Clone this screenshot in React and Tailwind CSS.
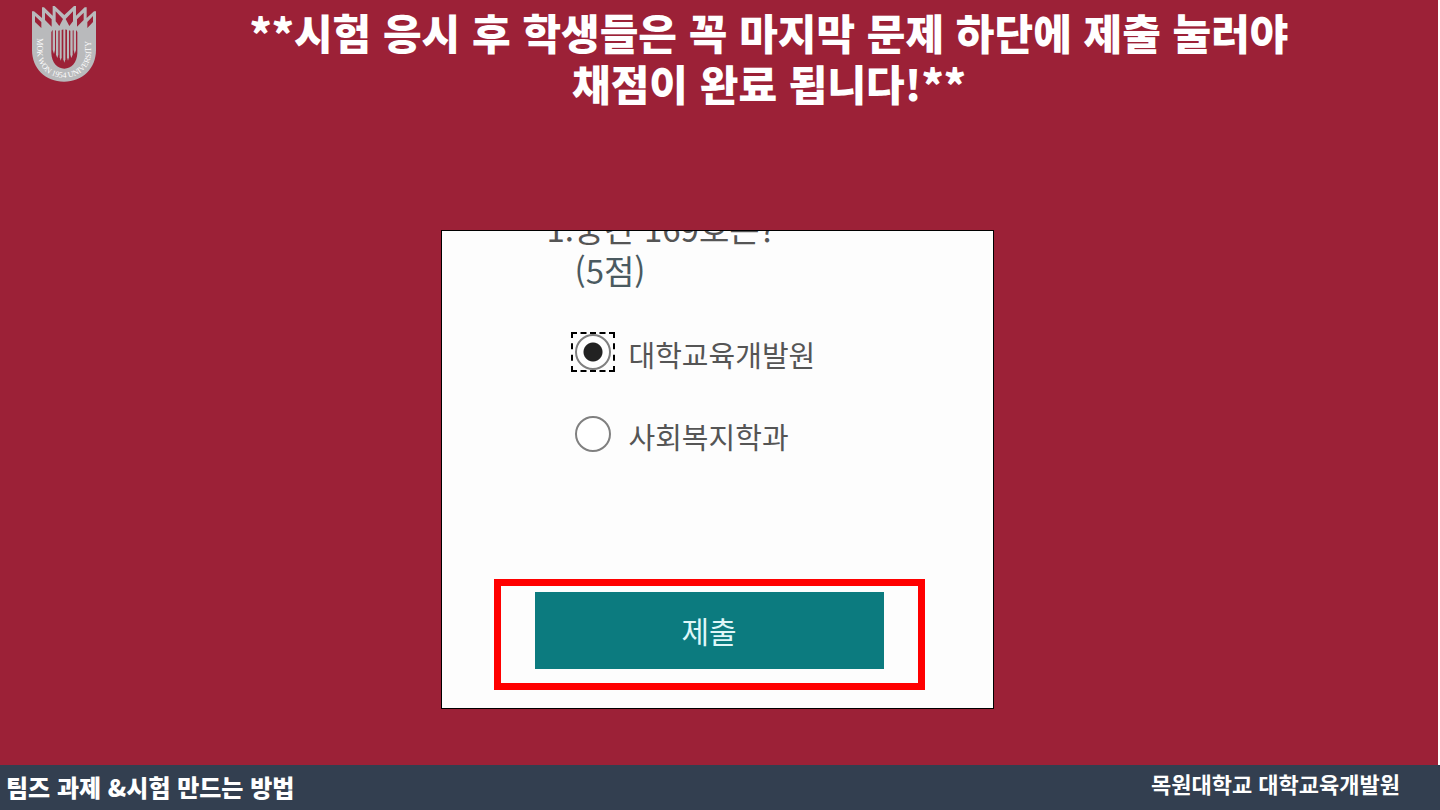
const KR = "font-['Noto_Sans_CJK_KR',sans-serif]";

function Emblem() {
  return (
    <svg viewBox="36 18 192 228" className="w-16 shrink-0" role="img" aria-label="MOKWON UNIVERSITY">
      <path
        fill="#b9babc"
        fillRule="evenodd"
        d="M36 34H42L66 54V22H72L98 47V18H104L133 45L162 18H168V47L194 22H200V54L222 34H228V150C228 205 188 245 132 245C76 245 36 205 36 150Z
           M45 48L64 66V84L45 66Z M75 38L95 58V80L75 60Z M107 34L129 57L118 78L107 64Z
           M219 48L202 66V84L219 66Z M191 38L171 58V80L191 60Z M159 34L137 57L148 78L159 64Z
           M94 96V160C95 188 112 206 133 206C154 206 171 188 172 160V96L168 90L152 92L133 88L114 92L98 90Z"
      />
      <g fill="#b9babc">
        <path d="M98 86H105V150L102 162L98 150Z" />
        <path d="M108 86H115V164L112 174L108 164Z" />
        <path d="M119 86H125V172L122 182L119 172Z" />
        <path d="M130 84H136V178L133 188L130 178Z" />
        <path d="M141 86H147V172L144 182L141 172Z" />
        <path d="M151 86H158V164L154 174L151 164Z" />
        <path d="M161 86H168V150L164 162L161 150Z" />
      </g>
      <path id="emblem-arc" fill="none" d="M51 115V150C51 202 86 233 132 233C178 233 214 202 214 150V100" />
      <text fill="#fff" fontSize="24" className="font-['Liberation_Serif',serif]">
        <textPath href="#emblem-arc">MOK WON 1954 UNIVERSITY</textPath>
      </text>
    </svg>
  );
}

const radio =
  "size-9 appearance-none rounded-full border-2 border-[#808080] bg-white checked:bg-[radial-gradient(circle,#222_9px,transparent_10px)]";

function Option({ id, label, checked }) {
  return (
    <div className="flex h-10 items-center gap-3.5">
      <span
        className={
          checked
            ? "flex h-10 w-11 items-center justify-center border-2 border-dashed border-black"
            : "flex h-10 w-11 items-center justify-center"
        }
      >
        <input id={id} type="radio" name="answer" defaultChecked={checked} className={radio} />
      </span>
      <label htmlFor={id} className="pt-1 text-[29px] leading-9 text-[#555]">
        {label}
      </label>
    </div>
  );
}

export default function App() {
  return (
    <div className={`${KR} flex min-h-screen flex-col bg-[#333f50] text-white`} lang="ko">
      <main className="flex flex-1 flex-col border-r-2 border-white bg-[#9c2137]">
        <header className="flex items-start px-8 pt-1.5">
          <Emblem />
          <h1 className="flex-1 pl-9 text-center text-[42px] leading-[51px] font-black">
            **시험 응시 후 학생들은 꼭 마지막 문제 하단에 제출 눌러야
            <br />
            채점이 완료 됩니다!**
          </h1>
        </header>

        <div className="flex justify-center pt-[122px] pr-1">
          <form
            className="flex h-[479px] w-[553px] flex-col overflow-hidden border border-black bg-[#fdfdfd]"
            onSubmit={(e) => e.preventDefault()}
          >
            <div role="radiogroup" aria-labelledby="question" className="-mt-6 flex flex-col pl-[129px]">
              <p id="question" className="-ml-6 text-[33px] leading-[42px] text-[#555]">
                1.중간 169호는?
                <span className="block pl-7 text-[#4a5a60]">(5점)</span>
              </p>
              <div className="mt-[41px] flex flex-col gap-[42px]">
                <Option id="center" label="대학교육개발원" checked />
                <Option id="welfare" label="사회복지학과" />
              </div>
            </div>
            <div className="mt-auto mr-[68px] mb-[18px] ml-[52px] border-[7px] border-[#f00] px-[34px] pt-1.5 pb-3.5">
              <button type="submit" className="h-[77px] w-full bg-[#0c7b7f] text-[30px] text-[#dff6f8]">
                제출
              </button>
            </div>
          </form>
        </div>
      </main>

      <footer className="flex h-[45px] items-start justify-between pr-10 pl-1.5">
        <p className="pt-1.5 text-2xl leading-8 font-black">팀즈 과제 &amp;시험 만드는 방법</p>
        <p className="pt-0.5 text-[22px] leading-8 font-bold">목원대학교 대학교육개발원</p>
      </footer>
    </div>
  );
}
